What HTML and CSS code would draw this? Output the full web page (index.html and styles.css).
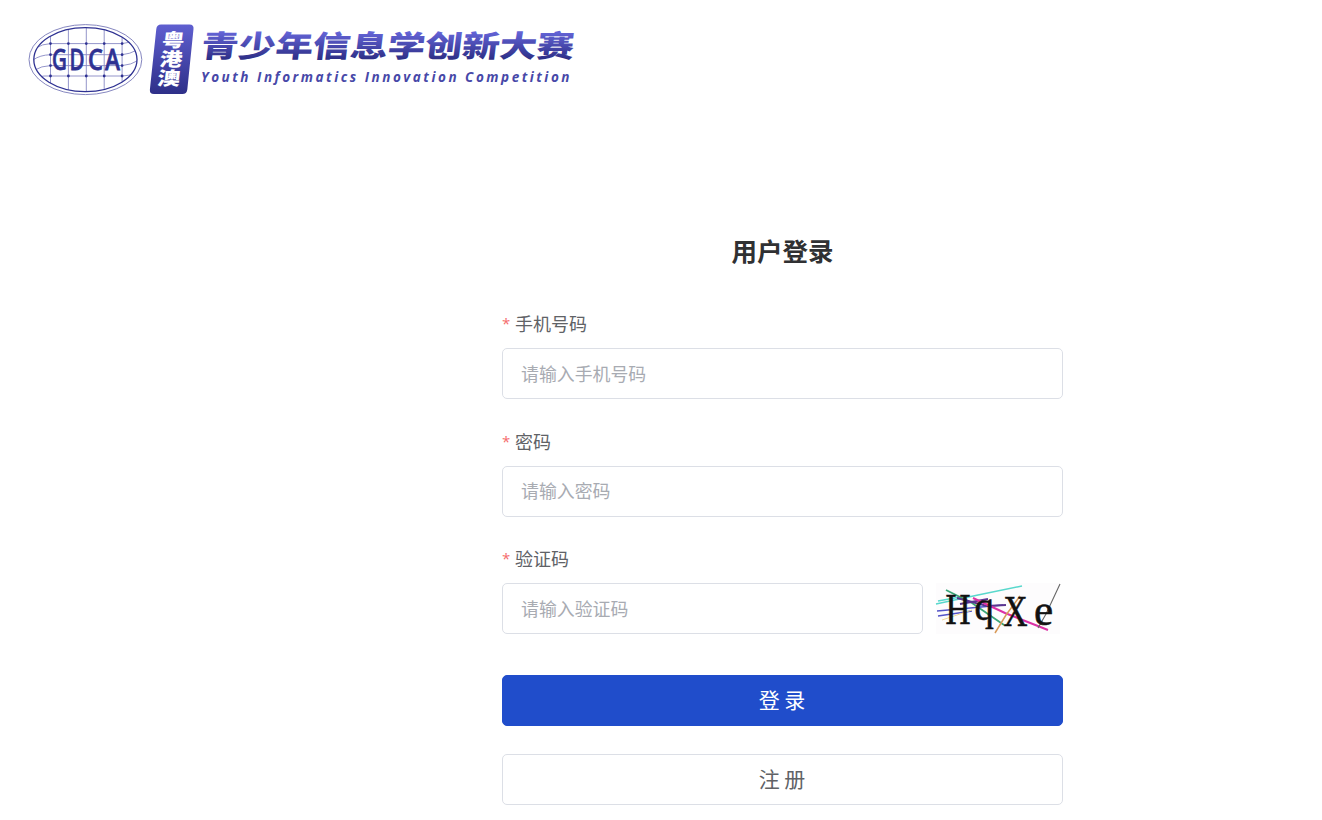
FILE: index.html
```html
<!DOCTYPE html>
<html lang="zh-CN">
<head>
<meta charset="utf-8">
<title>用户登录</title>
<link rel="stylesheet" href="styles.css">
</head>
<body>
<header class="header">
  <svg class="brand" viewBox="20 16 568 88" role="img" aria-label="GDCA">
    <defs>
      <linearGradient id="badgeFill" x1="0" y1="0" x2="0" y2="1">
        <stop offset="0" stop-color="#5f5fd0"/><stop offset="1" stop-color="#2e2f88"/>
      </linearGradient>
      <linearGradient id="titleFill" gradientUnits="userSpaceOnUse" x1="0" y1="-25" x2="0" y2="3">
        <stop offset="0" stop-color="#6363d6"/><stop offset="1" stop-color="#2c2d84"/>
      </linearGradient>
      <clipPath id="globe"><ellipse cx="85.4" cy="59.6" rx="51.6" ry="32"/></clipPath>
    </defs>
    <ellipse class="ring-outer" cx="85.4" cy="59.6" rx="56.4" ry="35"/>
    <g class="grid" clip-path="url(#globe)">
      <path d="M50.5 20V100M68.4 20V100M86.3 20V100M104.2 20V100M122.1 20V100"/>
      <path d="M50.5 43.6H122.1M50.5 54.7H122.1M50.5 65.6H122.1M50.5 76H122.1"/>
      <path d="M36 48Q42 44 50.5 43.6M33 60Q40 55 50.5 54.7M35 70Q41 66 50.5 65.6M38 77Q44 75.5 50.5 76M122.1 43.6Q129 43 134 40M122.1 54.7Q130 54 137 50M122.1 65.6Q131 65 139 60M122.1 76Q129 76 135 73"/>
    </g>
    <ellipse class="ring-inner" cx="85.4" cy="59.6" rx="51.6" ry="32"/>
    <path class="nodes" d="M50.5 43.6h0M68.4 43.6h0M86.3 43.6h0M104.2 43.6h0M122.1 43.6h0M50.5 54.7h0M122.1 54.7h0M50.5 65.6h0M122.1 65.6h0M50.5 76h0M68.4 76h0M86.3 76h0M104.2 76h0M122.1 76h0"/>
    <g class="gdca">
      <text transform="translate(52 70) scale(.72 1)">G</text>
      <text transform="translate(69.6 70) scale(.72 1)">D</text>
      <text transform="translate(88 70) scale(.82 1)">C</text>
      <text transform="translate(105 70) scale(.8 1)">A</text>
    </g>
    <path fill="url(#badgeFill)" d="M161 24.5H189.5Q194 24.5 193.5 29L187.3 89.5Q186.8 94 182.4 94H154Q149.4 94 149.9 89.5L156.3 29Q156.8 24.5 161 24.5Z"/>
    <g class="badge-text">
      <text transform="translate(161.2 47) skewX(-7) scale(1.22 1)">粤</text>
      <text transform="translate(159 66.4) skewX(-7) scale(1.22 1)">港</text>
      <text transform="translate(156.8 85.4) skewX(-7) scale(1.22 1)">澳</text>
    </g>
    <text class="title" fill="url(#titleFill)" transform="translate(200 57.2) skewX(-7) scale(1.25 1)" textLength="298.5" lengthAdjust="spacing">青少年信息学创新大赛</text>
    <text class="subtitle" x="201" y="81.5" textLength="368.5" lengthAdjust="spacing">Youth Informatics Innovation Competition</text>
  </svg>
</header>
<main class="login">
  <h1 class="heading">用户登录</h1>
  <form class="form">
    <div class="field">
      <label class="label" for="phone">手机号码</label>
      <input class="input" id="phone" type="text" placeholder="请输入手机号码">
    </div>
    <div class="field">
      <label class="label" for="password">密码</label>
      <input class="input" id="password" type="password" placeholder="请输入密码">
    </div>
    <div class="field">
      <label class="label" for="code">验证码</label>
      <div class="code-row">
        <input class="input" id="code" type="text" placeholder="请输入验证码">
        <svg class="captcha" viewBox="936 583 126 51">
          <rect x="936" y="583" width="124" height="51" fill="#fdfcfd"/>
          <g fill="none" stroke-width="1.5">
            <path stroke="#58d8cc" d="M936 604L978 595L1022 586M938 601L960 597"/>
            <path stroke="#3aa678" stroke-width="1.8" d="M946 590L972 603L1004 625"/>
            <path stroke="#5555c8" d="M937 611L970 608L1003 605M938 616L972 611"/>
            <path stroke="#5b348f" stroke-width="2" d="M957 598L987 606L1006 605M960 604L988 599"/>
            <path stroke="#dc31a5" stroke-width="2" d="M973 598L1005 613L1048 630"/>
            <path stroke="#d89b58" d="M1020 596L1006 615L995 633"/>
            <path stroke="#666" stroke-width="1.1" d="M1060 584L1046 614L1038 628"/>
            <path stroke="#eedc9b" stroke-width="1" d="M942 620L972 610"/>
          </g>
          <g class="captcha-text">
            <text transform="translate(945.5 624) scale(.77 1)">H</text>
            <text transform="translate(974.5 619.5) scale(.86 .92)">q</text>
            <text transform="translate(1003.5 626) scale(.74 1)">X</text>
            <text transform="translate(1034 624.5) scale(.96 1)">e</text>
          </g>
        </svg>
      </div>
    </div>
    <button class="button primary" type="button">登 录</button>
    <button class="button" type="button">注 册</button>
  </form>
</main>
</body>
</html>
```
FILE: styles.css
```css
* { box-sizing: border-box; }
body {
  margin: 0;
  height: 820px;
  overflow: hidden;
  background: #fff;
  font-family: "Noto Sans CJK SC", sans-serif;
  color: #606266;
}
.header { padding: 16px 20px 0; height: 228px; }
.brand { display: block; width: 568px; height: 88px; }
.ring-outer { fill: #fff; stroke: #7778b8; stroke-width: .9; }
.ring-inner { fill: none; stroke: #2e3192; stroke-width: 1.3; }
.grid { fill: none; stroke: #8889c4; stroke-width: .9; }
.nodes { stroke: #2e3192; stroke-width: 2.8; stroke-linecap: round; }
.gdca { font: 500 28.5px "Noto Sans", sans-serif; fill: #2e3192; stroke: #2e3192; stroke-width: .8; }
.badge-text { font: 900 18.5px "Noto Sans CJK SC", sans-serif; fill: #fff; }
.title { font: 900 30px "Noto Sans CJK SC", sans-serif; }
.subtitle { font: italic 700 13.5px "Open Sans", sans-serif; fill: #4748a8; }
.login { width: 561px; margin-left: 502px; }
.heading {
  margin: 0 0 32px;
  height: 44px;
  font-size: 25.5px;
  line-height: 44px;
  font-weight: 700;
  color: #303133;
  text-align: center;
}
.form { display: flex; flex-direction: column; }
.field { margin-bottom: 23.5px; }
.label {
  display: flex;
  height: 44px;
  line-height: 38px;
  font-size: 18px;
  font-weight: 400;
}
.field + .field .label { height: 43px; line-height: 36px; }
.label::before {
  content: "*";
  width: 13px;
  font-family: "Open Sans", sans-serif;
  font-size: 15px;
  color: #f56c6c;
}
.input {
  display: block;
  width: 100%;
  height: 51px;
  padding: 0 18px 2px;
  border: 1px solid #dcdfe6;
  border-radius: 5px;
  background: #fff;
  font: 400 17.9px "Noto Sans CJK SC", sans-serif;
  color: #606266;
  outline: none;
}
.input::placeholder { color: #a8abb2; opacity: 1; }
.code-row { display: flex; gap: 13px; }
.code-row .input { width: 421px; }
.captcha { width: 126px; height: 51px; overflow: visible; }
.captcha-text {
  font: 45px "Liberation Serif", serif;
  fill: #111;
  stroke: #111;
  stroke-width: .6;
}
.button {
  height: 51px;
  margin: 0 0 28px;
  padding: 0 1px 2px 0;
  border: 1px solid #dcdfe6;
  border-radius: 5px;
  background: #fff;
  color: #606266;
  font: 400 21px "Noto Sans CJK SC", sans-serif;
}
.primary { margin-top: 17px; border-color: #204dcb; background: #204dcb; color: #fff; }
```
